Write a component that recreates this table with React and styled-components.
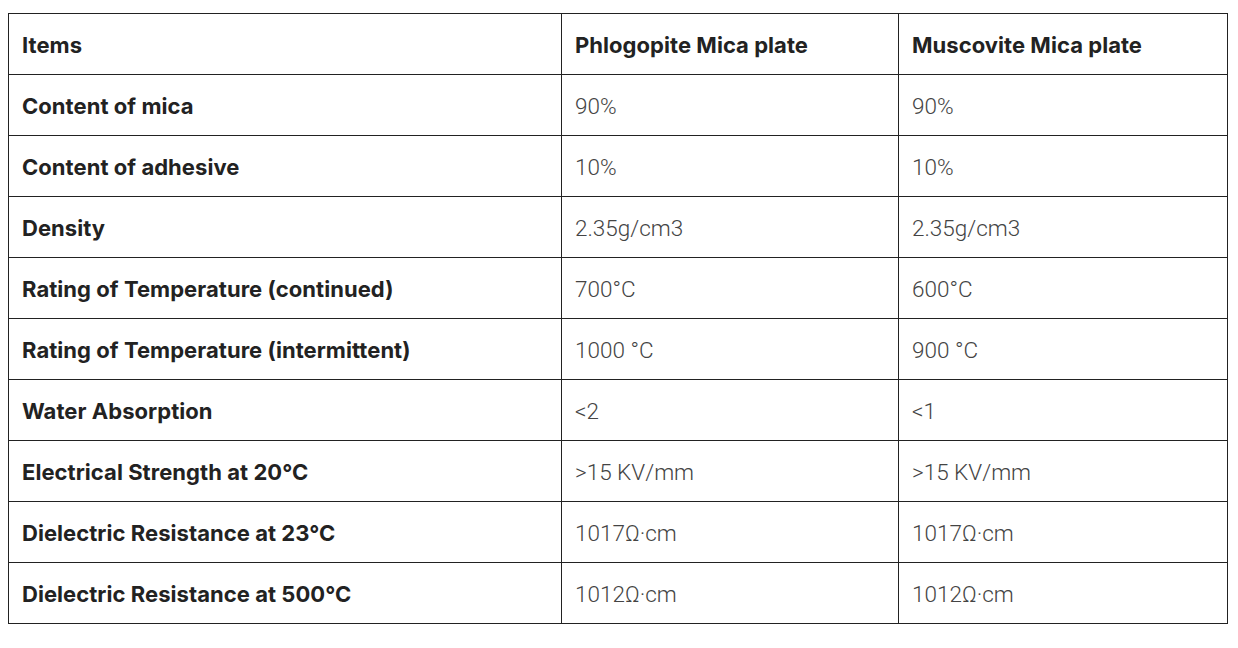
import React from 'react';
import styled, { createGlobalStyle } from 'styled-components';

const GlobalStyle = createGlobalStyle`
    body {
        margin: 0;
        background: #ffffff;
        font-family: Roboto, "Liberation Sans", sans-serif;
    }
`

const Page = styled.div`
    padding: 13px 12px 0 8px;
`

const Table = styled.table`
    width: 1219px;
    border-collapse: collapse;
    table-layout: fixed;
`

const Row = styled.tr`
    height: 61px;
`

const Cell = styled.td`
    border: 1px solid #222222;
    padding: 2px 13px 0;
    vertical-align: middle;
    line-height: 1.2;
    ${props => props.$head ? `
        font-family: Inter, Roboto, sans-serif;
        font-size: 22px;
        font-weight: 700;
        color: #222222;
        letter-spacing: 0.05px;
    ` : `
        font-family: Roboto, "Liberation Sans", sans-serif;
        font-size: 22.5px;
        font-weight: 300;
        color: #444444;
    `}
`

const rows = [
    ['Content of mica', '90%', '90%'],
    ['Content of adhesive', '10%', '10%'],
    ['Density', '2.35g/cm3', '2.35g/cm3'],
    ['Rating of Temperature (continued)', '700°C', '600°C'],
    ['Rating of Temperature (intermittent)', '1000 °C', '900 °C'],
    ['Water Absorption', '<2', '<1'],
    ['Electrical Strength at 20°C', '>15 KV/mm', '>15 KV/mm'],
    ['Dielectric Resistance at 23°C', '1017Ω·cm', '1017Ω·cm'],
    ['Dielectric Resistance at 500°C', '1012Ω·cm', '1012Ω·cm'],
];

function App() {
    return (
        <Page>
            <GlobalStyle />
            <Table>
                <colgroup>
                    <col style={{ width: 553 }} />
                    <col style={{ width: 337 }} />
                    <col style={{ width: 329 }} />
                </colgroup>
                <tbody>
                    <Row>
                        <Cell $head>Items</Cell>
                        <Cell $head>Phlogopite Mica plate</Cell>
                        <Cell $head>Muscovite Mica plate</Cell>
                    </Row>
                    {rows.map(([item, a, b]) => (
                        <Row key={item}>
                            <Cell $head>{item}</Cell>
                            <Cell>{a}</Cell>
                            <Cell>{b}</Cell>
                        </Row>
                    ))}
                </tbody>
            </Table>
        </Page>
    )
}

export default App;
